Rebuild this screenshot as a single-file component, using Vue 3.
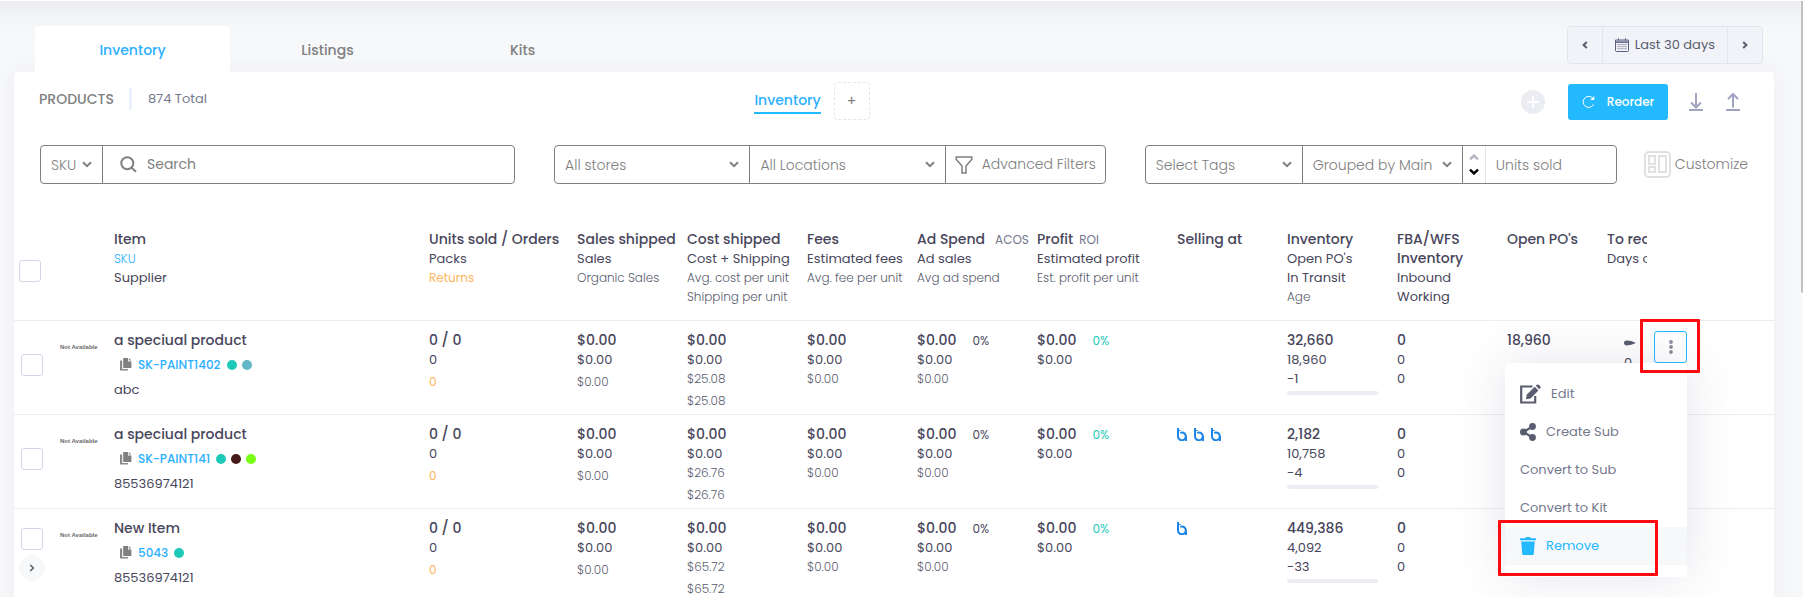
<script setup>
const tabs = ['Inventory', 'Listings', 'Kits']

const columns = [
  { key: 'item', lines: [['Item', 'strong'], ['SKU', 'link'], ['Supplier', 'normal']] },
  { key: 'units', lines: [['Units sold / Orders', 'strong'], ['Packs', 'normal'], ['Returns', 'orange']] },
  { key: 'sales', lines: [['Sales shipped', 'strong'], ['Sales', 'normal'], ['Organic Sales', 'light']] },
  { key: 'cost', lines: [['Cost shipped', 'strong'], ['Cost + Shipping', 'normal'], ['Avg. cost per unit', 'light'], ['Shipping per unit', 'light']] },
  { key: 'fees', lines: [['Fees', 'strong'], ['Estimated fees', 'normal'], ['Avg. fee per unit', 'light']] },
  { key: 'ads', side: 'ACOS', lines: [['Ad Spend', 'strong'], ['Ad sales', 'normal'], ['Avg ad spend', 'light']] },
  { key: 'profit', side: 'ROI', lines: [['Profit', 'strong'], ['Estimated profit', 'normal'], ['Est. profit per unit', 'light']] },
  { key: 'selling', lines: [['Selling at', 'strong']] },
  { key: 'stock', lines: [['Inventory', 'strong'], ["Open PO's", 'normal'], ['In Transit', 'normal'], ['Age', 'light']] },
  { key: 'fba', lines: [['FBA/WFS', 'strong'], ['Inventory', 'strong'], ['Inbound', 'normal'], ['Working', 'normal']] },
  { key: 'open', lines: [["Open PO's", 'strong']] },
  { key: 'reorder', lines: [['To reorder', 'strong'], ['Days of stock', 'normal']] }
]

const rows = [
  { id: 1, name: 'a speciual product', sku: 'SK-PAINT1402', dots: ['teal', 'steel'], supplier: 'abc', cost: '$25.08', stores: 0, stock: ['32,660', '18,960', '-1'], open: '18,960', menu: true },
  { id: 2, name: 'a speciual product', sku: 'SK-PAINT141', dots: ['teal', 'maroon', 'lime'], supplier: '85536974121', cost: '$26.76', stores: 3, stock: ['2,182', '10,758', '-4'] },
  { id: 3, name: 'New Item', sku: '5043', dots: ['teal'], supplier: '85536974121', cost: '$65.72', stores: 1, stock: ['449,386', '4,092', '-33'], expandable: true }
]
</script>

<template>
  <div class="page">
    <header class="top">
      <nav class="tabs">
        <a v-for="(tab, i) in tabs" :key="tab" href="#" class="tab" :class="{ active: i === 0 }">{{ tab }}</a>
      </nav>
      <div class="range">
        <button type="button" class="step" aria-label="Previous period">
          <svg width="6" height="8" viewBox="0 0 6 8"><path d="M4.8 1 1.6 4l3.2 3" /></svg>
        </button>
        <button type="button" class="period">
          <svg width="14" height="14" viewBox="0 0 14 14">
            <path d="M.5 2h13v10.500q0 1-1 1h-11q-1 0-1-1zM.5 4.500h13M3.500.3v2.400M10.500.3v2.400" fill="none" stroke="#5f6080" />
            <path d="M1 2.500h12v1.800H1z" fill="#8d90aa" />
            <path d="M2.500 6.500h9M2.500 8.600h9M2.500 10.700h9" fill="none" stroke="#5f6080" stroke-dasharray="1 1" />
          </svg>
          Last 30 days
        </button>
        <button type="button" class="step" aria-label="Next period">
          <svg width="6" height="8" viewBox="0 0 6 8"><path d="M1.2 1l3.2 3-3.2 3" /></svg>
        </button>
      </div>
    </header>

    <main class="card">
      <div class="title-bar">
        <div class="title">
          <h1>PRODUCTS</h1>
          <span class="total">874 Total</span>
        </div>
        <div class="views">
          <a href="#" class="view">Inventory</a>
          <button type="button" class="add-view" aria-label="Add view">+</button>
        </div>
        <div class="tools">
          <button type="button" class="tool" aria-label="Add product">
            <svg width="24" height="24" viewBox="0 0 24 24"><circle cx="12" cy="12" r="12" fill="#ebedf3" /><path d="M12 6v12M6 12h12" stroke="#fff" stroke-width="2" /></svg>
          </button>
          <button type="button" class="reorder">
            <svg width="14" height="14" viewBox="0 0 14 14" fill="none" stroke="#fff"><path d="M11.6 9.3A5.5 5.5 0 1 1 11 3.5" /><path d="M12.3 1v4H8.2z" fill="#fff" stroke="none" /></svg>
            Reorder
          </button>
          <button type="button" class="tool" aria-label="Download">
            <svg width="14" height="18" viewBox="0 0 14 18" class="arrow"><path d="M7 0v14M2 9.5 7 14.5l5-5M0 17h14" /></svg>
          </button>
          <button type="button" class="tool upload" aria-label="Upload">
            <svg width="14" height="18" viewBox="0 0 14 18" class="arrow"><path d="M7 1v13.5M2 6 7 1l5 5M0 17h14" /></svg>
          </button>
        </div>
      </div>

      <form class="filters" @submit.prevent>
        <div class="group group-search">
          <label class="field field-sku">
            <select aria-label="Search by"><option>SKU</option></select>
            <svg class="chev" width="10" height="7" viewBox="0 0 10 7"><path d="M1 1.2 5 5.2l4-4" /></svg>
          </label>
          <label class="field search">
            <svg width="17" height="17" viewBox="0 0 17 17" fill="none" stroke="#808080" stroke-width="2"><circle cx="7.3" cy="7.3" r="6" /><path d="m11.6 11.6 4.4 4.2" /></svg>
            <input type="text" placeholder="Search" aria-label="Search" />
          </label>
        </div>
        <div class="group group-stores">
          <label class="field">
            <select aria-label="Stores"><option>All stores</option></select>
            <svg class="chev" width="10" height="7" viewBox="0 0 10 7"><path d="M1 1.2 5 5.2l4-4" /></svg>
          </label>
          <label class="field">
            <select aria-label="Locations"><option>All Locations</option></select>
            <svg class="chev" width="10" height="7" viewBox="0 0 10 7"><path d="M1 1.2 5 5.2l4-4" /></svg>
          </label>
          <button type="button" class="field advanced">
            <svg width="18" height="18" viewBox="0 0 18 18" fill="none" stroke="#808080" stroke-width="1.5"><path d="M1.2 1h15.6v2.2L11 10v7H7v-7L1.2 3.2z" /></svg>
            Advanced Filters
          </button>
        </div>
        <div class="group group-tags">
          <label class="field field-tags">
            <select aria-label="Tags"><option>Select Tags</option></select>
            <svg class="chev" width="10" height="7" viewBox="0 0 10 7"><path d="M1 1.2 5 5.2l4-4" /></svg>
          </label>
          <label class="field field-grouping">
            <select aria-label="Grouping"><option>Grouped by Main</option></select>
            <svg class="chev" width="10" height="7" viewBox="0 0 10 7"><path d="M1 1.2 5 5.2l4-4" /></svg>
          </label>
          <button type="button" class="field sort" aria-label="Sort direction">
            <svg width="10" height="7" viewBox="0 0 10 7" class="up"><path d="M1 5.4 5 1.6l4 3.8" /></svg>
            <svg width="10" height="7" viewBox="0 0 10 7" class="down"><path d="M1 1.6l4 3.8 4-3.8" /></svg>
          </button>
          <label class="field field-sort">
            <select aria-label="Sort by"><option>Units sold</option></select>
          </label>
        </div>
        <button type="button" class="customize">
          <svg width="27" height="27" viewBox="0 0 27 27" fill="none" stroke="#e0e0e0" stroke-width="2"><rect x="1" y="1" width="25" height="25" rx="4" /><rect x="5" y="5" width="6" height="8" /><rect x="5" y="16" width="6" height="5" /><rect x="15" y="5" width="7" height="16" /></svg>
          Customize
        </button>
      </form>

      <table>
        <colgroup>
          <col class="c-check" /><col class="c-image" /><col v-for="c in columns" :key="c.key" :class="'c-' + c.key" /><col class="c-actions" />
        </colgroup>
        <thead>
          <tr>
            <th class="check"><input type="checkbox" aria-label="Select all" /></th>
            <th></th>
            <th v-for="c in columns" :key="c.key" :class="'h-' + c.key">
              <div v-for="(line, i) in c.lines" :key="i" class="line" :class="line[1]">
                {{ line[0] }}<span v-if="c.side && i === 0" class="side">{{ c.side }}</span>
              </div>
            </th>
            <th></th>
          </tr>
        </thead>
        <tbody>
          <tr v-for="r in rows" :key="r.id">
            <td class="check" :class="{ expandable: r.expandable }">
              <input type="checkbox" :aria-label="'Select ' + r.sku" />
              <button v-if="r.expandable" type="button" class="expand" aria-label="Expand">
                <svg width="6" height="8" viewBox="0 0 6 8"><path d="M1.2 1l3.2 3-3.2 3" /></svg>
              </button>
            </td>
            <td><div class="no-image">Not Available</div></td>
            <td>
              <div class="line strong">{{ r.name }}</div>
              <div class="sku">
                <svg width="12" height="13" viewBox="0 0 12 13"><path d="M0 2.5h2.2V11H8v1.5H0z" fill="#8a8a8a" /><path d="M3.2 0H8v3.4h3.4V10H3.2z" fill="#808080" /><path d="M8.8 0 11.4 2.6H8.8z" fill="#808080" /></svg>
                <a href="#">{{ r.sku }}</a>
                <i v-for="d in r.dots" :key="d" class="dot" :class="d"></i>
              </div>
              <div class="line normal supplier">{{ r.supplier }}</div>
            </td>
            <td>
              <div class="line strong">0 / 0</div>
              <div class="line normal">0</div>
              <div class="line orange spaced">0</div>
            </td>
            <td>
              <div class="line strong">$0.00</div>
              <div class="line normal">$0.00</div>
              <div class="line light spaced">$0.00</div>
            </td>
            <td>
              <div class="line strong">$0.00</div>
              <div class="line normal">$0.00</div>
              <div class="line light">{{ r.cost }}</div>
              <div class="line light spaced">{{ r.cost }}</div>
            </td>
            <td>
              <div class="line strong">$0.00</div>
              <div class="line normal">$0.00</div>
              <div class="line light">$0.00</div>
            </td>
            <td>
              <div class="line strong">$0.00<span class="percent">0%</span></div>
              <div class="line normal">$0.00</div>
              <div class="line light">$0.00</div>
            </td>
            <td>
              <div class="line strong">$0.00<span class="percent green">0%</span></div>
              <div class="line normal">$0.00</div>
            </td>
            <td>
              <div class="stores">
                <svg v-for="n in r.stores" :key="n" width="10" height="13" viewBox="0 0 10 13" fill="none" stroke="#1c85e8" stroke-width="2">
                  <path d="M1 0v8.200A3.900 3.900 0 1 0 3.200 4.800M9 8v5" /><path d="M2 2.500h1.500" stroke-width="1" />
                </svg>
              </div>
            </td>
            <td>
              <div class="line strong">{{ r.stock[0] }}</div>
              <div class="line normal">{{ r.stock[1] }}</div>
              <div class="line normal">{{ r.stock[2] }}</div>
              <div class="meter"></div>
            </td>
            <td>
              <div class="line strong">0</div>
              <div class="line normal">0</div>
              <div class="line normal">0</div>
            </td>
            <td><div class="line strong">{{ r.open }}</div></td>
            <td class="h-reorder">
              <div v-if="r.menu" class="pending">
                <svg width="12" height="6" viewBox="0 0 12 6"><path d="M0 3Q0 .6 3 .6 7 .6 12 3 7 5.4 3 5.4 0 5.4 0 3z" fill="#595d6e" /></svg>
                <div class="line normal">0</div>
              </div>
            </td>
            <td class="actions">
              <div v-if="r.menu" class="dropdown">
                <button type="button" class="kebab" aria-label="Row actions" aria-expanded="true">
                  <svg width="4" height="14" viewBox="0 0 4 14" fill="#8a8d9c"><circle cx="2" cy="2" r="1.9" /><circle cx="2" cy="7" r="1.9" /><circle cx="2" cy="12" r="1.9" /></svg>
                </button>
                <div class="mark mark-kebab"></div>
                <div class="menu">
                  <button type="button" class="edit">
                    <svg width="21" height="20" viewBox="0 0 21 20" fill="#5a5c70"><path d="M12.5 2.5H1.2v16h14V12" fill="none" stroke="#5a5c70" stroke-width="2.2" /><path d="m6 15.3.8-4.8 8-7.7 3.6 3.7-7.8 7.9zM15.8 1.8l1-1q1-.8 2 0L20.2 2.3q.9 1 0 1.9l-1 1z" /></svg>
                    Edit
                  </button>
                  <button type="button">
                    <svg width="16" height="18" viewBox="0 0 16 18" fill="#5a5c70"><path d="M12.5 3.5 3.5 9l9 5.5" fill="none" stroke="#5a5c70" stroke-width="2.2" /><circle cx="12.5" cy="3.5" r="3.4" /><circle cx="3.5" cy="9" r="3.5" /><circle cx="12.5" cy="14.5" r="3.4" /></svg>
                    Create Sub
                  </button>
                  <button type="button">Convert to Sub</button>
                  <button type="button">Convert to Kit</button>
                  <button type="button" class="remove">
                    <svg width="16" height="18" viewBox="0 0 16 18" fill="#22b9ff"><path d="M0 1.2h5L6 0h4l1 1.2h5V3.2H0zM1.2 4.5h13.6l-1 12.3q-.1 1.2-1.3 1.2h-9q-1.2 0-1.3-1.2z" /></svg>
                    Remove
                    <span class="mark mark-remove"></span>
                  </button>
                </div>
              </div>
            </td>
          </tr>
        </tbody>
      </table>
    </main>
    <div class="scroll-thumb"></div>
  </div>
</template>

<style>
html,
body {
  margin: 0;
  overflow: hidden;
}
</style>

<style scoped>
.page {
  position: relative;
  box-sizing: border-box;
  height: 100vh;
  overflow: hidden;
  padding: 25px 29px 0 14px;
  border-top: 1px solid #fff;
  background: linear-gradient(#ececf0, #f3f4f6 14px, #f7f8fa 34px);
  font-family: Poppins, Inter, "Open Sans", sans-serif;
  font-size: 14px;
  color: #808080;
}
button,
input,
select {
  font: inherit;
  color: inherit;
}
button {
  padding: 0;
  border: 0;
  background: none;
}
a {
  text-decoration: none;
}
.top {
  display: flex;
  justify-content: space-between;
  align-items: flex-start;
  padding: 0 11px 0 21px;
}
.tabs {
  display: flex;
}
.tab {
  width: 195px;
  height: 46px;
  line-height: 48px;
  text-align: center;
  font-size: 14px;
  font-weight: 500;
  color: #808080;
  border-radius: 4px 4px 0 0;
}
.tab.active {
  background: #fff;
  color: #2cb0ff;
}
.range {
  display: flex;
  box-sizing: border-box;
  height: 38px;
  border: 1px solid #e2e5ec;
  border-radius: 4px;
  background: #f2f3f8;
  color: #595d6e;
}
.range button {
  display: flex;
  align-items: center;
  justify-content: center;
}
.range .step {
  width: 34px;
}
.range .period {
  gap: 6px;
  padding: 0 12px;
  border: solid #e2e5ec;
  border-width: 0 1px;
  font-size: 13px;
}
.step path,
.expand path {
  fill: none;
  stroke: #595d6e;
  stroke-width: 2;
}
.card {
  background: #fff;
  border-radius: 4px;
  box-shadow: 0 0 24px rgba(82, 63, 105, 0.05);
}
.top {
  position: relative;
}
.title-bar {
  display: grid;
  grid-template-columns: 1fr auto 1fr;
  height: 60px;
  padding: 0 34px 0 25px;
}
.title {
  display: flex;
  align-items: center;
  height: 54px;
}
h1 {
  margin: 0;
  padding-right: 15px;
  font-size: 14px;
  font-weight: 500;
  line-height: 22px;
  border-right: 3px solid #ebf1ff;
}
.total {
  padding-left: 16px;
  font-size: 13px;
  color: #74788d;
}
.views {
  display: flex;
  align-items: center;
  gap: 13px;
  height: 58px;
  padding-right: 155px;
}
.view {
  line-height: 23px;
  font-size: 14px;
  font-weight: 500;
  color: #2cb0ff;
  border-bottom: 2px solid #22b9ff;
}
.add-view {
  box-sizing: border-box;
  width: 36px;
  height: 38px;
  border: 1px dashed #e4e6ee;
  border-radius: 4px;
}
.tools {
  display: flex;
  align-items: center;
  justify-content: flex-end;
}
.tool {
  display: flex;
}
.reorder {
  display: flex;
  align-items: center;
  justify-content: center;
  gap: 11px;
  width: 100px;
  height: 36px;
  margin: 0 21px 0 23px;
  border-radius: 3px;
  background: #22b9ff;
  color: #fff;
  font-size: 12px;
  font-weight: 500;
}
.upload {
  margin-left: 23px;
}
.arrow {
  fill: none;
  stroke: #a1a3c0;
  stroke-width: 2;
}
.filters {
  display: flex;
  align-items: center;
  margin-top: 13px;
  padding: 0 26px;
  font-size: 14px;
  font-weight: 300;
  color: #808080;
}
.group {
  display: flex;
  box-sizing: border-box;
  height: 39px;
  border: 1px solid #808080;
  border-radius: 4px;
}
.group-search {
  flex: 475;
  margin-right: 39px;
}
.group-stores {
  flex: 552;
  margin-right: 39px;
}
.group-tags {
  flex: 472;
}
.field {
  display: grid;
  flex: 1;
  align-items: center;
  min-width: 0;
}
.field + .field {
  border-left: 1px solid #808080;
}
.field select {
  grid-area: 1 / 1;
  width: 100%;
  height: 100%;
  padding: 0 10px;
  border: 0;
  background: none;
  appearance: none;
}
.chev {
  grid-area: 1 / 1;
  justify-self: end;
  margin-right: 10px;
  pointer-events: none;
}
.chev path {
  fill: none;
  stroke: #808080;
  stroke-width: 2;
}
.field-sku {
  flex: 0 0 61px;
}
.search {
  display: flex;
  gap: 10px;
  padding-left: 17px;
}
.search input {
  flex: 1;
  padding: 0;
  border: 0;
  background: none;
  font-weight: 400;
}
.search input::placeholder {
  color: #808080;
}
.advanced {
  display: flex;
  flex: 0 0 160px;
  justify-content: center;
  gap: 9px;
}
.field-tags {
  flex: 0 0 156px;
}
.field-grouping {
  flex: 0 0 159px;
}
.sort {
  flex: 0 0 23px;
  align-content: center;
  justify-content: center;
  gap: 7px;
}
.sort path {
  fill: none;
  stroke: #b5b5c3;
  stroke-width: 2.5;
}
.sort .down path {
  stroke: #000;
}
.sort + .field {
  border-color: #e4e4e8;
}
.customize {
  display: flex;
  align-items: center;
  gap: 4px;
  margin-left: 27px;
  font-weight: 300;
}
table {
  width: 100%;
  margin-top: 46px;
  table-layout: fixed;
  border-collapse: collapse;
  color: #48465b;
}
.c-check { width: 46px; }
.c-image { width: 54px; }
.c-units { width: 148px; }
.c-sales { width: 110px; }
.c-cost { width: 120px; }
.c-fees { width: 110px; }
.c-ads { width: 120px; }
.c-profit { width: 140px; }
.c-selling { width: 110px; }
.c-stock { width: 110px; }
.c-fba { width: 110px; }
.c-open { width: 100px; }
.c-reorder { width: 40px; }
.c-actions { width: 127px; }
th,
td {
  padding: 0;
  text-align: left;
  vertical-align: top;
  font-weight: 400;
}
tr {
  border-bottom: 1px solid #ebedf2;
}
thead tr {
  height: 90px;
}
tbody tr {
  height: 94px;
}
td {
  padding-top: 10px;
}
.line {
  height: 19px;
  line-height: 19px;
  font-size: 13px;
  white-space: nowrap;
}
.strong {
  font-size: 14px;
  font-weight: 500;
}
.light {
  font-size: 12px;
  font-weight: 300;
  color: #595d6e;
}
.link {
  font-size: 12px;
  font-weight: 300;
  color: #2cb0ff;
}
.orange {
  font-size: 12px;
  color: #ffb65c;
}
.spaced {
  margin-top: 3px;
}
.side {
  margin-left: 6px;
  font-size: 12px;
  font-weight: 400;
  color: #74788d;
}
.h-ads .side {
  margin-left: 10px;
}
.percent {
  margin-left: 16px;
  font-size: 12px;
  font-weight: 400;
}
.green {
  color: #1dc9b7;
}
.h-reorder {
  overflow: hidden;
}
.check {
  padding-left: 7px;
}
th.check {
  padding: 30px 0 0 5px;
}
.check input {
  display: block;
  box-sizing: border-box;
  width: 22px;
  height: 22px;
  margin: 0;
  appearance: none;
  border: 1px solid #d1d7e6;
  border-radius: 3px;
  background: #fff;
}
td.check {
  padding-top: 33px;
}
td.check.expandable {
  padding: 19px 0 0 5px;
}
.expandable input {
  margin: 0 2px 5px;
}
.expand {
  display: grid;
  place-items: center;
  width: 26px;
  height: 26px;
  border-radius: 50%;
  background: #f7f8fa;
}
.expand path {
  stroke-width: 1.5;
}
.no-image {
  padding-top: 11px;
  font: bold 6px/10px "Liberation Sans", sans-serif;
  color: #6b6b6b;
  white-space: nowrap;
}
.sku {
  display: flex;
  align-items: center;
  gap: 6px;
  height: 30px;
  padding-left: 6px;
  font-size: 12px;
  font-weight: 500;
}
.sku a {
  color: #2cb0ff;
}
.dot {
  width: 10px;
  height: 10px;
  border-radius: 50%;
}
.dot + .dot {
  margin-left: -1px;
}
.teal { background: #1dc9b7; }
.steel { background: #63b6c6; }
.maroon { background: #451a1a; }
.lime { background: #78ff12; }
.stores {
  display: flex;
  gap: 7px;
  padding-top: 3px;
}
.meter {
  width: 91px;
  height: 4px;
  margin-top: 3px;
  border-radius: 2px;
  background: #ebedf2;
}
.pending {
  padding-left: 17px;
}
.pending svg {
  display: block;
  margin: 9px 0 7px;
}
.actions {
  padding: 10px 0 0 7px;
}
.dropdown {
  position: relative;
  z-index: 2;
  width: 33px;
}
.kebab {
  display: grid;
  place-items: center;
  box-sizing: border-box;
  width: 33px;
  height: 32px;
  border: 1px solid #22b9ff;
  border-radius: 3px;
  background: #fff;
}
.menu {
  position: absolute;
  top: 100%;
  right: 0;
  box-sizing: border-box;
  width: 182px;
  padding: 12px 0;
  border-radius: 4px;
  background: #fff;
  box-shadow: 0 0 50px rgba(82, 63, 105, 0.15);
}
.menu button {
  position: relative;
  display: flex;
  align-items: center;
  gap: 10px;
  width: 100%;
  height: 38px;
  padding-left: 15px;
  font-size: 13px;
  color: #74788d;
}
.menu .remove {
  background: #f7f8fa;
  color: #22b9ff;
}
.mark {
  position: absolute;
  border: 3px solid #ff0a0f;
  border-radius: 1px;
  pointer-events: none;
}
.mark-kebab {
  z-index: 1;
  inset: -12px -13px -10px -14px;
}
.mark-remove {
  inset: -7px 29px -11px -7px;
}
.scroll-thumb {
  position: absolute;
  top: -5px;
  right: 0;
  width: 2px;
  height: 297px;
  border-radius: 2px 0 0 2px;
  background: #c1c1c1;
}
</style>
